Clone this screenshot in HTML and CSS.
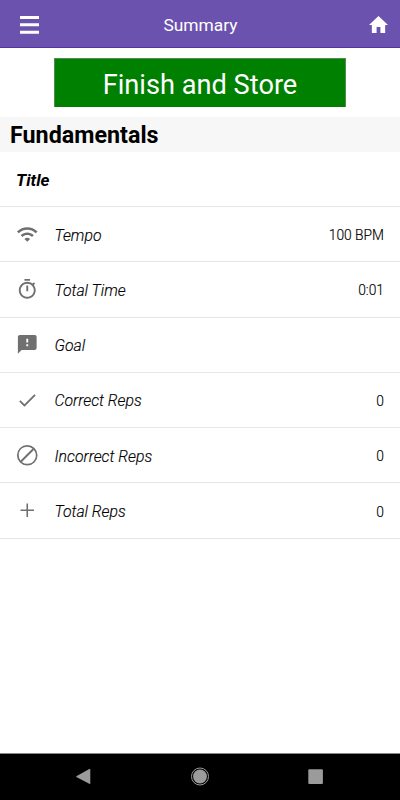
FILE: index.html
```html
<!DOCTYPE html>
<html lang="en">
<head>
<meta charset="utf-8">
<title>Summary</title>
<link rel="stylesheet" href="styles.css">
</head>
<body>
<header class="toolbar">
  <svg class="menu" viewBox="0 0 20 19"><path d="M0 0h19v3H0zM0 7.3h19v3H0zM0 14.8h19v3H0z"/></svg>
  <h1>Summary</h1>
  <svg class="home" viewBox="2 3 20 17" preserveAspectRatio="none"><path d="M10 20v-6h4v6h5v-8h3L12 3 2 12h3v8z"/></svg>
</header>
<main>
  <button class="finish">Finish and Store</button>
  <h2>Fundamentals</h2>
  <ul>
    <li class="title">Title</li>
    <li><svg viewBox="0 0 24 24"><path d="M1 9l2 2c4.97-4.97 13.03-4.97 18 0l2-2C16.93 2.93 7.08 2.93 1 9zm8 8l3 3 3-3c-1.65-1.66-4.34-1.66-6 0zm-4-4l2 2c2.76-2.76 7.24-2.76 10 0l2-2C15.14 9.14 8.87 9.14 5 13z"/></svg><span class="label">Tempo</span><span class="value">100 BPM</span></li>
    <li><svg viewBox="0 0 24 24"><path d="M15 1H9v2h6V1zm-4 13h2V8h-2v6zm8.03-6.61l1.42-1.42c-.43-.51-.9-.99-1.41-1.41l-1.42 1.42C16.07 4.74 14.12 4 12 4c-4.97 0-9 4.03-9 9s4.02 9 9 9 9-4.03 9-9c0-2.12-.74-4.07-1.97-5.61zM12 20c-3.87 0-7-3.13-7-7s3.13-7 7-7 7 3.13 7 7-3.13 7-7 7z"/></svg><span class="label">Total Time</span><span class="value">0:01</span></li>
    <li><svg viewBox="0 0 24 24"><path d="M20 2H4c-1.100 0-1.990.9-1.990 2L2 22l4-4h14c1.100 0 2-.9 2-2V4c0-1.100-.9-2-2-2zm-7 12h-2v-2h2v2zm0-4h-2V6h2v4z"/></svg><span class="label">Goal</span></li>
    <li><svg viewBox="0 0 24 24"><path d="M9 16.170L4.830 12l-1.420 1.410L9 19 21 7l-1.410-1.410z"/></svg><span class="label">Correct Reps</span><span class="value">0</span></li>
    <li><svg viewBox="0 0 24 24"><path fill-rule="evenodd" d="M12 1a11 11 0 1 0 0 22 11 11 0 0 0 0-22zM2.900 12a9.100 9.100 0 0 1 14.700-7.150L4.850 17.600A9 9 0 0 1 2.900 12zm9.100 9.100a9 9 0 0 1-5.700-2L19.100 6.300A9.100 9.100 0 0 1 12 21.100z"/></svg><span class="label">Incorrect Reps</span><span class="value">0</span></li>
    <li><svg viewBox="0 0 24 24"><path d="M19.200 12.850h-6.350v6.350h-1.700v-6.350H4.800v-1.700h6.350V4.800h1.700v6.350h6.350z"/></svg><span class="label">Total Reps</span><span class="value">0</span></li>
  </ul>
</main>
<nav>
  <svg viewBox="0 0 20 20"><path d="M3.300 10.200 L16.300 3.100 Q17.300 2.600 17.300 3.600V17.300Q17.300 18.300 16.300 17.700L3.300 10.900Z"/></svg>
  <svg viewBox="0 0 20 20"><circle cx="10" cy="10.500" r="8.500" fill="none" stroke="#9b9b9b"/><circle cx="10" cy="10.500" r="6.900"/></svg>
  <svg viewBox="0 0 20 20"><rect x="2.300" y="3.200" width="14.600" height="14.800" rx="1"/></svg>
</nav>
</body>
</html>
```

FILE: styles.css
```css
* { box-sizing: border-box; }
body {
  margin: 0;
  height: 800px;
  display: flex;
  flex-direction: column;
  overflow: hidden;
  background: #fff;
  color: #000;
  font-family: Roboto, sans-serif;
}
.toolbar {
  height: 48px;
  padding: 0 12px 0 20px;
  display: grid;
  grid-template-columns: 20px 1fr 19px;
  align-items: center;
  background: #6b52ae;
  border-bottom: 1px solid #5a30a5;
  color: #fff;
  fill: #fff;
}
.toolbar h1 {
  margin: 3px 8px 0 0;
  text-align: center;
  font-size: 17.400px;
  line-height: 24px;
  font-weight: 400;
}
.menu { width: 20px; height: 19px; margin-top: 3px; }
.home { width: 19px; height: 17px; margin-top: 1px; }
main {
  flex: 1;
  display: flex;
  flex-direction: column;
}
.finish {
  width: 292px;
  height: 49px;
  margin: 10px auto;
  padding: 3px 0 0;
  border: 1px solid #4f8f4f;
  border-bottom: 0;
  background: #008000;
  color: #fff;
  font: 400 27.200px/46px Roboto, sans-serif;
}
h2 {
  margin: 0;
  height: 34.800px;
  padding-left: 10px;
  background: #f7f7f7;
  font-size: 23.300px;
  line-height: 36.500px;
  font-weight: 700;
}
ul { margin: 0; padding: 0; list-style: none; }
li {
  height: 55.280px;
  padding: 0 16px;
  display: flex;
  align-items: center;
  border-bottom: 1px solid #e7e7e7;
  font-size: 15.800px;
  font-weight: 300;
}
li svg { width: 22.500px; height: 22.500px; margin-right: 16px; fill: #707070; }
.label { flex: 1; padding-top: 2px; font-style: italic; -webkit-text-stroke: .15px #000; }
.value { padding-top: 2px; font-size: 13.800px; -webkit-text-stroke: .15px #000; }
.title { font-size: 17px; font-style: italic; font-weight: 700; padding-top: 2px; }
nav {
  height: 47px;
  padding: 0 74px 2px 73px;
  display: flex;
  align-items: center;
  justify-content: space-between;
  background: #000;
  border-top: 1px solid #888;
  fill: #9b9b9b;
}
nav svg { width: 20px; height: 20px; }
```
